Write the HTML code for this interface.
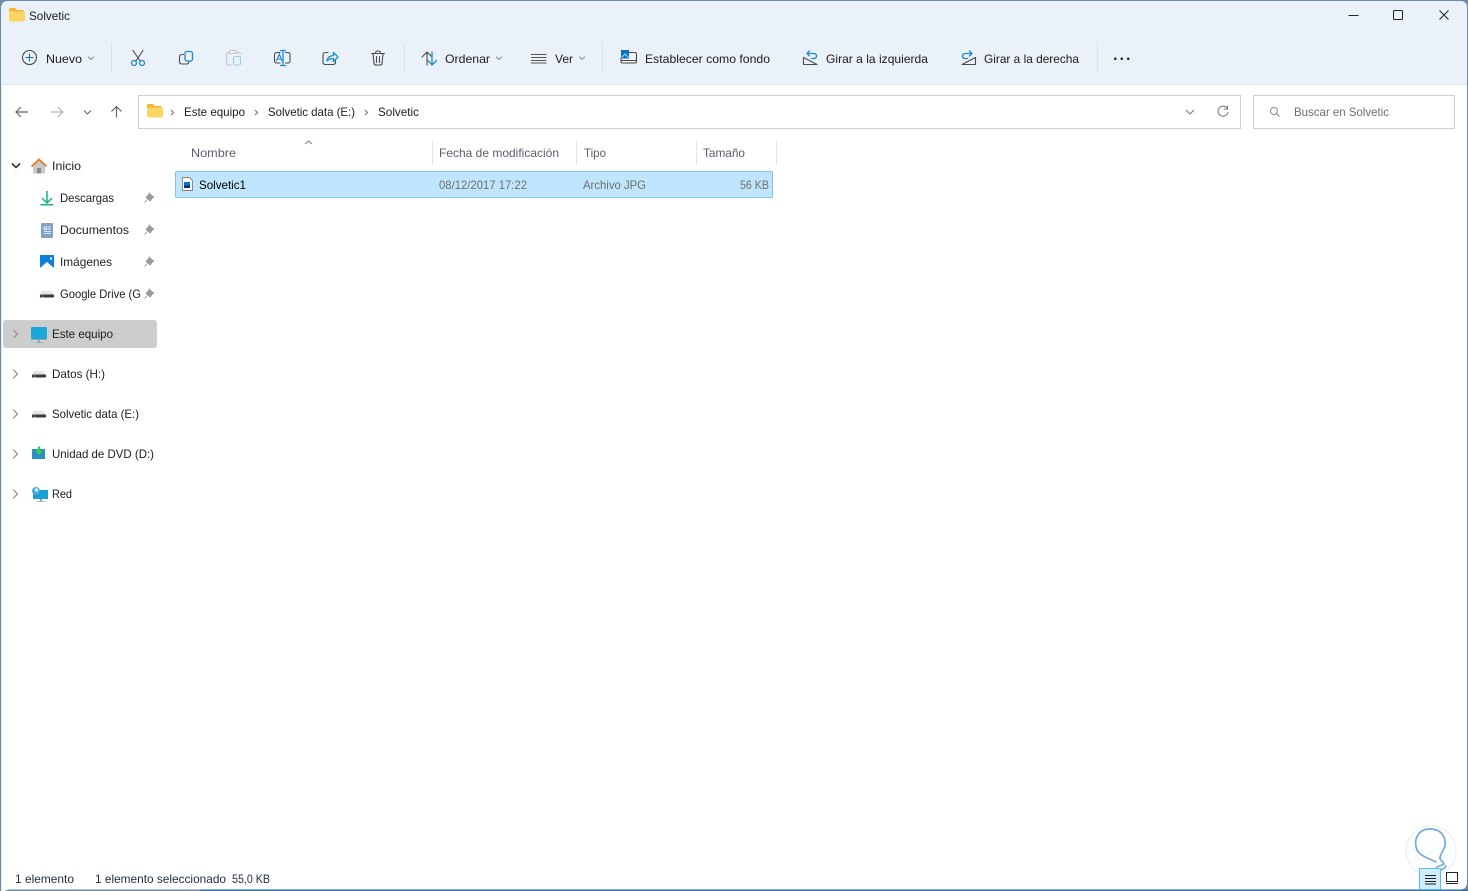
<!DOCTYPE html>
<html lang="es"><head><meta charset="utf-8"><title>Solvetic</title>
<style>
html,body{margin:0;padding:0;width:1468px;height:891px;overflow:hidden;background:#6d8ba3}
svg{display:block}
text{font-family:"Liberation Sans",sans-serif;font-size:12px;fill:#1c1c1c}
.h{fill:#5c5c6e}.g{fill:#6e6e6e}.k{fill:#000}
.s{fill:none;stroke:#4a4a4a;stroke-width:1.1;stroke-linecap:round;stroke-linejoin:round}
.b{fill:none;stroke:#1a8ad4;stroke-width:1.3;stroke-linecap:round;stroke-linejoin:round}
.c{fill:none;stroke:#8a8a8a;stroke-width:1;stroke-linecap:round;stroke-linejoin:round}
.n{fill:none;stroke:#9a9a9a;stroke-width:1.4;stroke-linecap:round;stroke-linejoin:round}
</style></head><body>
<svg width="1468" height="891" viewBox="0 0 1468 891" xmlns="http://www.w3.org/2000/svg">
<defs>
<g id="folder"><path d="M0 1.500q0-1.500 1.500-1.500h4.500l2 2h6.500v2H0z" fill="#f5b52e"/><path d="M0 3.500h14.500q1.500 0 1.500 1.500v7q0 1.500-1.500 1.500H1.500Q0 13.500 0 12z" fill="#fdd565"/></g>
<g id="drive"><path d="M2 0h10l2 3.500H0z" fill="#e2e4e6"/><rect x="0" y="3.500" width="14" height="3" rx=".8" fill="#3b3b3b"/><rect x="2" y="4.500" width="1.500" height="1" fill="#5fd08a"/></g>
<g id="pin"><path d="M5 0l5 4.500-2 .6-1.800 2.900-4.300-3.800 2.700-2.200zM3.200 6.500L.5 9.500" fill="#9b9b9b" stroke="#9b9b9b" stroke-width=".9" stroke-linejoin="round"/></g>
</defs>

<!-- window -->
<rect x="0" y="0" width="1468" height="891" fill="#6d8ba3"/>
<path d="M1.200 892V8Q1.200 1 8.500 1H1460Q1467 1 1467 8V882Q1467 889.500 1460 889.500H8.500" fill="#fff"/>
<path d="M1.200 84V8Q1.200 1 8.500 1H1460Q1467 1 1467 8V84z" fill="#eaf1f8"/>
<rect x="1.200" y="84" width="1465.800" height="1" fill="#dfe3e7"/>
<rect x="200" y="889.500" width="1268" height="1.500" fill="#2f6f9f"/>

<!-- title -->
<use href="#folder" x="9" y="8"/>
<text x="29" y="20" textLength="41" lengthAdjust="spacingAndGlyphs">Solvetic</text>
<path d="M1348.500 15.500h10" stroke="#222" stroke-width="1"/>
<rect x="1393.500" y="10.500" width="9" height="9" rx="1" fill="none" stroke="#222" stroke-width="1"/>
<path d="M1439.500 10.500l9 9m0-9l-9 9" stroke="#222" stroke-width="1" fill="none"/>

<!-- toolbar -->
<circle cx="29.500" cy="57.500" r="7" class="s"/>
<path d="M29.500 53.500v8m-4-4h8" stroke="#1a6fc0" stroke-width="1.100" fill="none"/>
<text x="46" y="63" textLength="36" lengthAdjust="spacingAndGlyphs">Nuevo</text>
<path d="M88.500 57l2.500 2.500 2.500-2.500" class="c"/>
<rect x="111" y="43" width="1" height="30" fill="#dde2e7"/>

<!-- scissors -->
<path d="M133 50.500l7.500 11M143 50.500l-7.500 11" class="s"/>
<circle cx="134" cy="63" r="2.500" class="b"/><circle cx="142" cy="63" r="2.500" class="b"/>
<!-- copy -->
<rect x="185" y="51.500" width="7.500" height="9.500" rx="2" class="b"/>
<path d="M183.500 54.500h-1.500q-2.500 0-2.500 2.500v4.500q0 2.500 2.500 2.500h4.500q2 0 2.500-2" class="s"/>
<!-- paste -->
<path d="M229 52.500h-.5q-1.800 0-1.800 2v8.500q0 2 1.800 2h3M237 52.500h1.500q1.800 0 2 2" fill="none" stroke="#c2c6ca" stroke-width="1.100"/>
<rect x="229.500" y="50.500" width="7" height="3" rx="1" fill="none" stroke="#c2c6ca"/>
<rect x="233.500" y="56.500" width="7" height="8.500" rx="1.500" fill="none" stroke="#9ccdf0" stroke-width="1.100"/>
<!-- rename -->
<path d="M280 52.500h-3q-2.500 0-2.500 2.500v5.500q0 2.500 2.500 2.500h3M285.500 52.500h2.500q2 0 2 2.500v5.500q0 2.500-2 2.500h-2.500" class="s"/>
<path d="M283 50.500v15M280.500 50.500h5M280.500 65.500h5" class="b"/>
<path d="M276.500 61l2.800-7 2.700 7M277.500 59h3.500" fill="none" stroke="#1a8ad4" stroke-width="1.100"/>
<!-- share -->
<path d="M328 52.500h-2.500q-2.500 0-2.500 2.500v7q0 2.500 2.500 2.500h7.500q2.500 0 2.500-2.500v-1" class="s"/>
<path d="M327 61q.5-5 6.500-5.500V52.500l4.500 4.500-4.500 4.500V58.500q-4 0-6.500 2.500z" class="b"/>
<!-- delete -->
<path d="M371.500 53.500h13M375.500 53.500q0-2.500 2-2.500h1q2 0 2 2.500M373 53.500l1 10q.2 1.500 1.800 1.500h4.400q1.600 0 1.800-1.500l1-10M376.500 56.500v6M379.500 56.500v6" class="s"/>
<rect x="404" y="43" width="1" height="30" fill="#dde2e7"/>
<!-- sort -->
<path d="M427 65V52m-5 5l5-5 5 5" class="s"/>
<path d="M432 52v13m-4-4.500l4 4.500 4.500-4.500" class="b"/>
<text x="445" y="63" textLength="45" lengthAdjust="spacingAndGlyphs">Ordenar</text>
<path d="M496.500 57l2.500 2.500 2.500-2.500" class="c"/>
<!-- view -->
<path d="M531 54.500h15.500M531 57.500h15.500M531 60.500h15.500M531 63h15.500" stroke="#555" stroke-width="1" fill="none"/>
<text x="555" y="63" textLength="18" lengthAdjust="spacingAndGlyphs">Ver</text>
<path d="M579.500 57l2.500 2.500 2.500-2.500" class="c"/>
<rect x="602" y="43" width="1" height="30" fill="#dde2e7"/>
<!-- set background -->
<path d="M628 52.500h7q1.500 0 1.500 1.500v7.500q0 1.500-1.500 1.500h-12.500q-1.500 0-1.500-1.500V58M621 60.500h15.500" class="s"/>
<rect x="621" y="50" width="8" height="8.500" fill="#0c6fc4"/>
<path d="M621.500 57.500l3.500-3.500 3.500 3.500" fill="none" stroke="#a9dcf7" stroke-width="1"/>
<text x="645" y="63" textLength="125" lengthAdjust="spacingAndGlyphs">Establecer como fondo</text>
<!-- rotate left -->
<path d="M803.500 57.500v7h13.500zl13.500 7" class="s"/>
<path d="M807 53.500h6.500q3 0 3 2.500t-3 2.500h-2M807 53.500l2.500-2.500M807 53.500l2.500 2.500" class="b"/>
<text x="826" y="63" textLength="102" lengthAdjust="spacingAndGlyphs">Girar a la izquierda</text>
<!-- rotate right -->
<path d="M975.500 57.500v7h-13.500z" class="s"/>
<path d="M972 53.500h-6.500q-3 0-3 2.500t3 2.500h2M972 53.500l-2.500-2.500M972 53.500l-2.500 2.500" class="b"/>
<text x="984" y="63" textLength="95" lengthAdjust="spacingAndGlyphs">Girar a la derecha</text>
<rect x="1097" y="43" width="1" height="30" fill="#dde2e7"/>
<g fill="#222"><rect x="1114" y="57.500" width="2.500" height="2.500" rx="1"/><rect x="1120.500" y="57.500" width="2.500" height="2.500" rx="1"/><rect x="1127" y="57.500" width="2.500" height="2.500" rx="1"/></g>

<!-- nav -->
<path d="M28 112H16.500m4.500-5l-5 5 5 5" fill="none" stroke="#666" stroke-width="1.200"/>
<path d="M51 112h11.500m-4.500-5l5 5-5 5" fill="none" stroke="#b4b4b4" stroke-width="1.200"/>
<path d="M84 110.500l3.500 3.500 3.500-3.500" fill="none" stroke="#666" stroke-width="1.100"/>
<path d="M116.500 117.500V106.500m-5 5l5-5 5 5" fill="none" stroke="#666" stroke-width="1.200"/>

<!-- address -->
<rect x="138.500" y="95.500" width="1102" height="33" fill="#fff" stroke="#d0d0d0"/>
<use href="#folder" x="147" y="104"/>
<path d="M171 110l2.500 2.500-2.500 2.500M255 110l2.500 2.500-2.500 2.500M365 110l2.500 2.500-2.500 2.500" fill="none" stroke="#777" stroke-width="1.100"/>
<text x="184" y="116" textLength="61" lengthAdjust="spacingAndGlyphs">Este equipo</text>
<text x="268" y="116" textLength="87" lengthAdjust="spacingAndGlyphs">Solvetic data (E:)</text>
<text x="378" y="116" textLength="41" lengthAdjust="spacingAndGlyphs">Solvetic</text>
<path d="M1186 110l4 4 4-4" fill="none" stroke="#777" stroke-width="1"/>
<path d="M1227.300 108.500a5 5 0 1 0 .7 3.500M1227.500 105.500v3.500h-3.500" fill="none" stroke="#777" stroke-width="1"/>
<rect x="1253.500" y="95.500" width="201" height="33" fill="#fff" stroke="#d0d0d0"/>
<circle cx="1274" cy="111" r="3.500" fill="none" stroke="#888"/>
<path d="M1276.500 113.500l3 3" stroke="#888" fill="none"/>
<text x="1294" y="116" textLength="95" lengthAdjust="spacingAndGlyphs" class="g">Buscar en Solvetic</text>

<!-- sidebar -->
<path d="M12 163.500l4 4 4-4" fill="none" stroke="#222" stroke-width="1.500"/>
<path d="M33 165v8.500h12V165l-6-5z" fill="#c9c9c9"/><rect x="37" y="168" width="4" height="5.500" fill="#8a8a8a"/>
<path d="M31.500 166.500l7.500-7 7.500 7" fill="none" stroke="#e8781e" stroke-width="1.800"/>
<text x="52" y="170" textLength="29" lengthAdjust="spacingAndGlyphs">Inicio</text>

<path d="M47 191v12m-5-5l5 5 5-5" fill="none" stroke="#14b389" stroke-width="1.500"/>
<rect x="40.500" y="204" width="13" height="1.500" fill="#14b389"/>
<text x="60" y="202" textLength="54" lengthAdjust="spacingAndGlyphs">Descargas</text>
<use href="#pin" x="144" y="193"/>

<rect x="41" y="223" width="12" height="15" rx="1" fill="#7fa3c9"/>
<path d="M44 227h2.500v2.500H44zM47.500 227H51M47.500 229H51M44 231.500h7M44 233.500h7" stroke="#fff" fill="none" stroke-width=".8"/>
<text x="60" y="234" textLength="69" lengthAdjust="spacingAndGlyphs">Documentos</text>
<use href="#pin" x="144" y="225"/>

<rect x="40" y="255" width="14" height="14" fill="#0d7fdc"/>
<path d="M40 269v-1l7-6 7 6v1z" fill="#fff"/>
<rect x="50" y="257.500" width="2" height="2" fill="#fff"/>
<text x="60" y="266" textLength="52" lengthAdjust="spacingAndGlyphs">Imágenes</text>
<use href="#pin" x="144" y="257"/>

<use href="#drive" x="40" y="291"/>
<text x="60" y="298" textLength="81" lengthAdjust="spacingAndGlyphs">Google Drive (G</text>
<rect x="141" y="286" width="3" height="16" fill="#fff"/>
<use href="#pin" x="144" y="289"/>

<rect x="3" y="320" width="154" height="28" rx="3" fill="#cdcdcd"/>
<path d="M13.500 330l4 4-4 4" fill="none" stroke="#9a9a9a" stroke-width="1.400"/>
<rect x="31" y="327" width="16" height="12" rx="1" fill="#19a7dc"/>
<path d="M31 339h16v1H31zM38 340h2v2h-2zM35.500 342h7v.8h-7z" fill="#8fa5b2"/>
<text x="52" y="338" textLength="61" lengthAdjust="spacingAndGlyphs">Este equipo</text>

<path d="M13.500 370l4 4-4 4" class="n"/>
<use href="#drive" x="32" y="371"/>
<text x="52" y="378" textLength="53" lengthAdjust="spacingAndGlyphs">Datos (H:)</text>

<path d="M13.500 410l4 4-4 4" class="n"/>
<use href="#drive" x="32" y="411"/>
<text x="52" y="418" textLength="87" lengthAdjust="spacingAndGlyphs">Solvetic data (E:)</text>

<path d="M13.500 450l4 4-4 4" class="n"/>
<rect x="32" y="449" width="13" height="10" fill="#2c8fc4"/>
<path d="M39 446.500v6.500m-3-2.500l3 3 3-3" fill="none" stroke="#2fd04e" stroke-width="2"/>
<text x="52" y="458" textLength="102" lengthAdjust="spacingAndGlyphs">Unidad de DVD (D:)</text>

<path d="M13.500 490l4 4-4 4" class="n"/>
<rect x="33" y="490" width="15" height="9" fill="#19a0d2"/>
<circle cx="36" cy="491" r="4" fill="#4aa8e0"/><circle cx="36.500" cy="490" r="1.800" fill="#d9eefa"/>
<path d="M40 499h2v2h-2zM37 501h8v.8h-8z" fill="#8fa5b2"/>
<text x="52" y="498" textLength="20" lengthAdjust="spacingAndGlyphs">Red</text>

<!-- list header -->
<path d="M305 144l3.500-3 3.500 3" fill="none" stroke="#777" stroke-width="1"/>
<text x="191" y="157" textLength="45" lengthAdjust="spacingAndGlyphs" class="h">Nombre</text>
<rect x="432" y="141" width="1" height="24" fill="#e3e3e3"/>
<text x="439" y="157" textLength="120" lengthAdjust="spacingAndGlyphs" class="h">Fecha de modificación</text>
<rect x="576" y="141" width="1" height="24" fill="#e3e3e3"/>
<text x="584" y="157" textLength="22" lengthAdjust="spacingAndGlyphs" class="h">Tipo</text>
<rect x="696" y="141" width="1" height="24" fill="#e3e3e3"/>
<text x="703" y="157" textLength="42" lengthAdjust="spacingAndGlyphs" class="h">Tamaño</text>
<rect x="776" y="141" width="1" height="24" fill="#e3e3e3"/>

<!-- row -->
<rect x="175.500" y="171.500" width="597" height="26" rx="1" fill="#bfe6fd" stroke="#7fc3f0"/>
<path d="M182.500 177.500h7l3 3v10h-10z" fill="#fff" stroke="#7e7e7e" stroke-width=".9"/>
<rect x="184" y="182" width="6" height="6" fill="#1170c4"/><rect x="184" y="185.500" width="6" height="2.500" fill="#0d2f6e"/>
<text x="199" y="189" textLength="47" lengthAdjust="spacingAndGlyphs" class="k">Solvetic1</text>
<text x="439" y="189" textLength="88" lengthAdjust="spacingAndGlyphs" class="g">08/12/2017 17:22</text>
<text x="583" y="189" textLength="63" lengthAdjust="spacingAndGlyphs" class="g">Archivo JPG</text>
<text x="740" y="189" textLength="29" lengthAdjust="spacingAndGlyphs" class="g">56 KB</text>

<!-- status -->
<text x="15" y="883" textLength="59" lengthAdjust="spacingAndGlyphs" style="fill:#1f2a44">1 elemento</text>
<text x="95" y="883" textLength="131" lengthAdjust="spacingAndGlyphs" style="fill:#1f2a44">1 elemento seleccionado</text>
<text x="232" y="883" textLength="38" lengthAdjust="spacingAndGlyphs" style="fill:#1f2a44">55,0 KB</text>

<!-- watermark -->
<circle cx="1431" cy="851" r="25" fill="#fcfdfe" stroke="#e8edf3" stroke-width="1"/>
<path d="M1436 862C1428 858 1420 856 1417 850 1413 840 1418 829 1430 829 1442 829 1446 838 1445 845 1444 851 1440 854 1440 858 1440 861 1444 862 1444 864 1441 866 1436 866 1436 869 1438 872 1445 869 1446 866" fill="none" stroke="#76a9d6" stroke-width="1.700" stroke-linecap="round"/>
<rect x="1419.500" y="868.500" width="21" height="21" fill="#d3ecfb" stroke="#5cc0ec" stroke-width="1"/>
<path d="M1425 875.500h11M1425 878.500h11M1425 881.500h11M1425 884h11" stroke="#222" stroke-width="1" fill="none"/>
<rect x="1446.500" y="872.500" width="11" height="9" fill="#fff" stroke="#222"/>
<path d="M1446 883.500h12" stroke="#222" fill="none"/>
</svg>
</body></html>
